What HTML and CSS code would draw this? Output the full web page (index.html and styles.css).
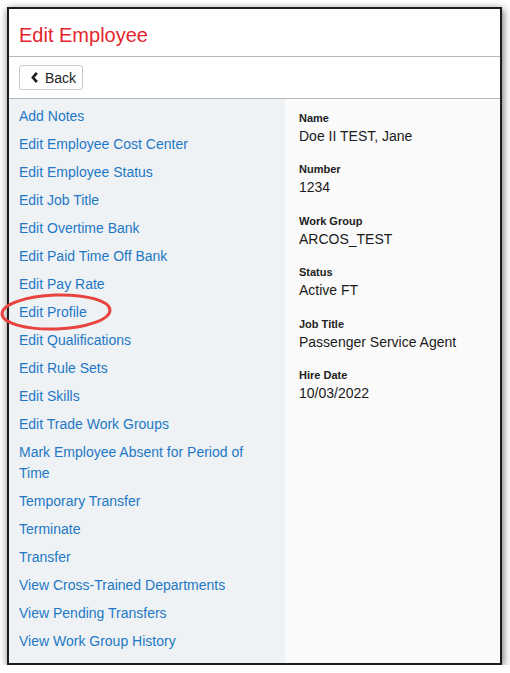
FILE: index.html
```html
<!DOCTYPE html>
<html lang="en">
<head>
    <meta charset="UTF-8">
    <meta name="viewport" content="width=device-width, initial-scale=1.0">
    <title>Edit Employee</title>
    <link rel="stylesheet" href="styles.css">
</head>
<body>
    <div class="window">
        <div class="page-header">
            <h1>Edit Employee</h1>
        </div>
        <div class="toolbar">
            <button class="btn-back">
                <svg class="chevron" width="7" height="11" viewBox="0 0 7 11"><path d="M4.8 0 L6.9 2.1 L3.5 5.5 L6.9 8.9 L4.8 11 L0.2 5.5 Z"/></svg>Back
            </button>
        </div>
        <div class="content">
            <div class="actions">
                <a href="#">Add Notes</a>
                <a href="#">Edit Employee Cost Center</a>
                <a href="#">Edit Employee Status</a>
                <a href="#">Edit Job Title</a>
                <a href="#">Edit Overtime Bank</a>
                <a href="#">Edit Paid Time Off Bank</a>
                <a href="#">Edit Pay Rate</a>
                <a href="#">Edit Profile</a>
                <a href="#">Edit Qualifications</a>
                <a href="#">Edit Rule Sets</a>
                <a href="#">Edit Skills</a>
                <a href="#">Edit Trade Work Groups</a>
                <a href="#">Mark Employee Absent for Period of Time</a>
                <a href="#">Temporary Transfer</a>
                <a href="#">Terminate</a>
                <a href="#">Transfer</a>
                <a href="#">View Cross-Trained Departments</a>
                <a href="#">View Pending Transfers</a>
                <a href="#">View Work Group History</a>
            </div>
            <div class="details">
                <div class="field">
                    <div class="label">Name</div>
                    <div class="value">Doe II TEST, Jane</div>
                </div>
                <div class="field">
                    <div class="label">Number</div>
                    <div class="value">1234</div>
                </div>
                <div class="field">
                    <div class="label">Work Group</div>
                    <div class="value">ARCOS_TEST</div>
                </div>
                <div class="field">
                    <div class="label">Status</div>
                    <div class="value">Active FT</div>
                </div>
                <div class="field">
                    <div class="label">Job Title</div>
                    <div class="value">Passenger Service Agent</div>
                </div>
                <div class="field">
                    <div class="label">Hire Date</div>
                    <div class="value">10/03/2022</div>
                </div>
            </div>
        </div>
    </div>
    <!-- annotation drawn over the screenshot -->
    <svg class="highlight-ring" width="120" height="46" viewBox="0 0 120 46">
        <ellipse cx="56" cy="22" rx="54" ry="17" transform="rotate(-2 56 22)"/>
    </svg>
</body>
</html>
```

FILE: styles.css
```css
body {
    margin: 0;
    background: #fff;
    font-family: "Liberation Sans", Arial, sans-serif;
    color: #222;
}
.window {
    position: relative;
    margin: 7px 0 0 7px;
    width: 491px;
    height: 654px;
    border: 2px solid #1c1c1c;
    background: #fff;
    box-shadow: 1px 2px 8px rgba(0, 0, 0, 0.6);
    display: flex;
    flex-direction: column;
}
.page-header {
    padding: 14px 10px 9px;
    border-bottom: 1px solid #b8b8b8;
}
.page-header h1 {
    margin: 0;
    font-size: 20px;
    line-height: 24px;
    font-weight: normal;
    color: #e5242e;
}
.toolbar {
    padding: 8px 10px 8px;
    border-bottom: 1px solid #b8b8b8;
}
.btn-back {
    display: flex;
    align-items: center;
    height: 25px;
    padding: 0 6px 0 11px;
    border: 1px solid #c8c8c8;
    border-radius: 3px;
    background: #fff;
    font-family: inherit;
    font-size: 14px;
    color: #222;
    cursor: pointer;
}
.chevron {
    fill: #1d1d1d;
    margin-right: 7px;
}
.content {
    flex: 1;
    display: flex;
}
.actions {
    width: 276px;
    box-sizing: border-box;
    padding: 3px 10px 0 10px;
    background: #eef2f4;
}
.actions a {
    display: block;
    padding: 3.5px 0;
    font-size: 14px;
    line-height: 21px;
    color: #1f78c6;
    text-decoration: none;
}
.details {
    flex: 1;
    padding: 11px 14px;
    background: #fafafa;
}
.field {
    margin-bottom: 15.4px;
}
.label {
    font-size: 11px;
    line-height: 16px;
    font-weight: bold;
    color: #222;
}
.value {
    font-size: 14px;
    line-height: 20px;
    color: #1a1a1a;
}
.highlight-ring {
    position: absolute;
    left: 0;
    top: 290px;
}
.highlight-ring ellipse {
    fill: none;
    stroke: #e8433e;
    stroke-width: 3;
}
```
